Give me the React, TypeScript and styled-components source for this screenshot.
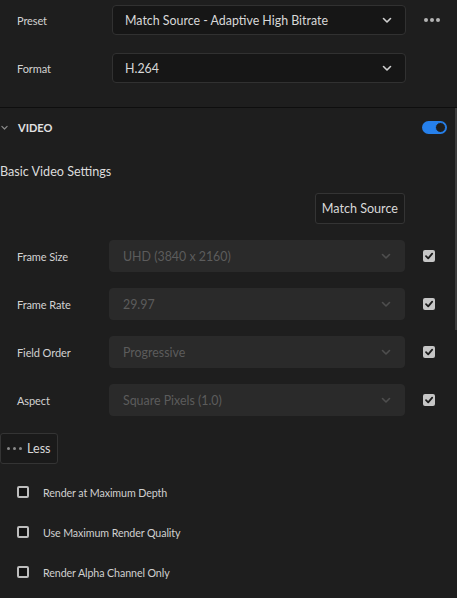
import React from 'react'
import styled, { createGlobalStyle } from 'styled-components'

const GlobalStyle = createGlobalStyle`
  html, body {
    margin: 0;
    padding: 0;
    background: #1e1e1e;
  }
  body {
    font-family: Lato, "Open Sans", sans-serif;
    color: #d6d6d6;
    overflow: hidden;
  }
`

const Panel = styled.div`
  position: relative;
  width: 457px;
  height: 598px;
  background: #1e1e1e;
  overflow: hidden;
`

const TopSection = styled.div`
  display: flex;
  flex-direction: column;
  gap: 18px;
  padding: 5px 0 24px;
  border-bottom: 1px solid #0e0e0e;
`

const Row = styled.div`
  display: flex;
  align-items: center;
`

const Label = styled.div<{ $width?: number }>`
  width: ${(p) => p.$width ?? 112}px;
  padding-left: 17px;
  box-sizing: border-box;
  font-size: 11px;
  letter-spacing: -0.1px;
  color: #d2d2d2;
  flex-shrink: 0;
`

const Select = styled.div<{ $disabled?: boolean }>`
  display: flex;
  align-items: center;
  justify-content: space-between;
  box-sizing: border-box;
  width: ${(p) => (p.$disabled ? 296 : 294)}px;
  height: ${(p) => (p.$disabled ? 32 : 30)}px;
  padding: 0 12px 0 ${(p) => (p.$disabled ? 13 : 12)}px;
  border-radius: 4px;
  background: ${(p) => (p.$disabled ? '#2a2a2a' : '#161616')};
  border: 1px solid ${(p) => (p.$disabled ? '#2a2a2a' : '#313131')};
  font-size: 12.4px;
  color: ${(p) => (p.$disabled ? '#5c5c5c' : '#d8d8d8')};
`

const MoreButton = styled.div`
  display: flex;
  align-items: center;
  gap: 2px;
  margin-left: 18px;
`

const Dot = styled.span<{ $color?: string; $size?: number }>`
  width: ${(p) => p.$size ?? 4}px;
  height: ${(p) => p.$size ?? 4}px;
  border-radius: 50%;
  background: ${(p) => p.$color ?? '#b4b4b4'};
`

const SectionHeader = styled.div`
  display: flex;
  align-items: center;
  height: 39px;
  padding-right: 10px;
`

const HeaderTitle = styled.div`
  flex: 1;
  font-size: 11px;
  font-weight: 700;
  color: #e2e2e2;
  margin-left: 9px;
`

const Toggle = styled.div`
  position: relative;
  width: 25px;
  height: 13px;
  border-radius: 7px;
  background: #2680eb;
`

const Knob = styled.div`
  position: absolute;
  right: 1px;
  top: 1px;
  width: 11px;
  height: 11px;
  box-sizing: border-box;
  border-radius: 50%;
  background: #1e1e1e;
  border: 1.5px solid #2680eb;
`

const SubTitle = styled.div`
  font-size: 12.6px;
  color: #dcdcdc;
  height: 24px;
  line-height: 24px;
  margin-top: 13px;
`

const ButtonRow = styled.div`
  display: flex;
  justify-content: flex-end;
  padding-right: 52px;
  margin-top: 9px;
`

const OutlineButton = styled.div`
  display: flex;
  align-items: center;
  gap: 5px;
  box-sizing: border-box;
  height: 31px;
  padding: 0 6px;
  border: 1px solid #343434;
  border-radius: 3px;
  background: #1a1a1a;
  font-size: 12.6px;
  color: #d8d8d8;
`

const SettingsList = styled.div`
  display: flex;
  flex-direction: column;
  gap: 16px;
  margin-top: 16px;
`

const Check = styled.div`
  display: flex;
  align-items: center;
  justify-content: center;
  width: 12px;
  height: 12px;
  margin-left: 18px;
  border-radius: 2px;
  background: #c6c6c6;
`

const LessRow = styled.div`
  display: flex;
  margin-top: 17px;
`

const Options = styled.div`
  display: flex;
  flex-direction: column;
  gap: 28px;
  margin-top: 22px;
`

const OptionRow = styled.div`
  display: flex;
  align-items: center;
  height: 12px;
  padding-left: 17px;
`

const EmptyBox = styled.div`
  width: 12px;
  height: 12px;
  box-sizing: border-box;
  border: 2px solid #bdbdbd;
  border-radius: 2px;
  background: #121212;
`

const OptionLabel = styled.div`
  margin-left: 14px;
  font-size: 10.7px;
  letter-spacing: -0.1px;
  color: #d0d0d0;
`

const ScrollThumb = styled.div`
  position: absolute;
  right: 0;
  top: 108px;
  width: 2px;
  height: 222px;
  background: #3c3c3c;
`

const Chevron = ({ color = '#d0d0d0', size = 12 }: { color?: string; size?: number }) => (
  <svg width={size} height={size} viewBox="0 0 12 12">
    <path d="M2.5 4.5 L6 8 L9.5 4.5" fill="none" stroke={color} strokeWidth="1.6" strokeLinecap="round" strokeLinejoin="round" />
  </svg>
)

const CheckMark = () => (
  <svg width="10" height="10" viewBox="0 0 10 10">
    <path d="M2 5.2 L4.2 7.4 L8.2 2.6" fill="none" stroke="#1c1c1c" strokeWidth="1.8" strokeLinecap="round" strokeLinejoin="round" />
  </svg>
)

const settings = [
  { label: 'Frame Size', value: 'UHD (3840 x 2160)' },
  { label: 'Frame Rate', value: '29.97' },
  { label: 'Field Order', value: 'Progressive' },
  { label: 'Aspect', value: 'Square Pixels (1.0)' },
]

const options = ['Render at Maximum Depth', 'Use Maximum Render Quality', 'Render Alpha Channel Only']

export default function App() {
  return (
    <Panel>
      <GlobalStyle />
      <TopSection>
        <Row>
          <Label>Preset</Label>
          <Select>
            <span>Match Source - Adaptive High Bitrate</span>
            <Chevron />
          </Select>
          <MoreButton>
            <Dot />
            <Dot />
            <Dot />
          </MoreButton>
        </Row>
        <Row>
          <Label>Format</Label>
          <Select>
            <span>H.264</span>
            <Chevron />
          </Select>
        </Row>
      </TopSection>

      <SectionHeader>
        <Chevron color="#8a8a8a" size={9} />
        <HeaderTitle>VIDEO</HeaderTitle>
        <Toggle>
          <Knob />
        </Toggle>
      </SectionHeader>

      <SubTitle>Basic Video Settings</SubTitle>

      <ButtonRow>
        <OutlineButton>Match Source</OutlineButton>
      </ButtonRow>

      <SettingsList>
        {settings.map((s) => (
          <Row key={s.label}>
            <Label $width={109}>{s.label}</Label>
            <Select $disabled>
              <span>{s.value}</span>
              <Chevron color="#4e4e4e" />
            </Select>
            <Check>
              <CheckMark />
            </Check>
          </Row>
        ))}
      </SettingsList>

      <LessRow>
        <OutlineButton>
          <Row style={{ gap: 3 }}>
            <Dot $size={3} $color="#8a8a8a" />
            <Dot $size={3} $color="#8a8a8a" />
            <Dot $size={3} $color="#8a8a8a" />
          </Row>
          Less
        </OutlineButton>
      </LessRow>

      <Options>
        {options.map((o) => (
          <OptionRow key={o}>
            <EmptyBox />
            <OptionLabel>{o}</OptionLabel>
          </OptionRow>
        ))}
      </Options>

      <ScrollThumb />
    </Panel>
  )
}
